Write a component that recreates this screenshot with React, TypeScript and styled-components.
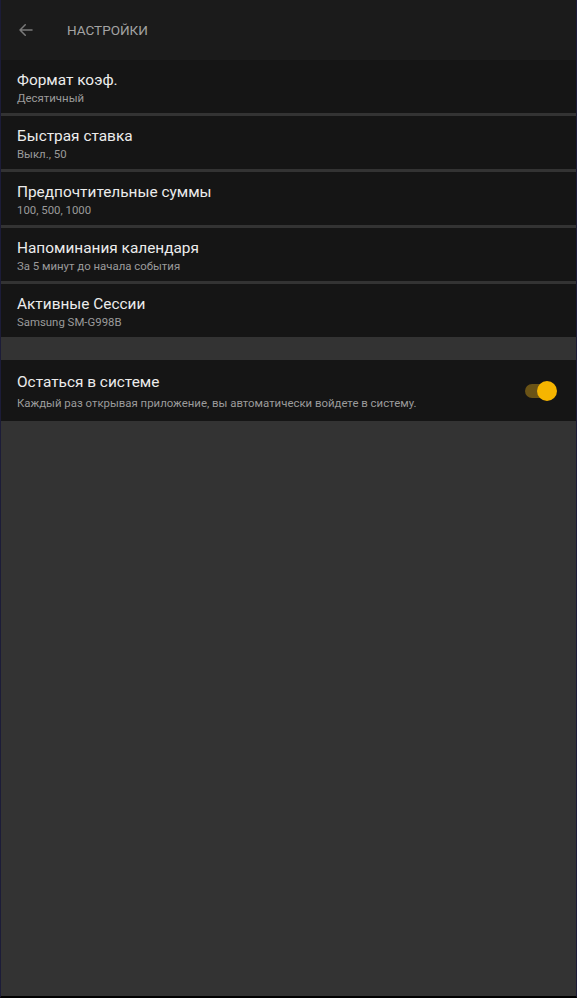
import React from "react";
import styled, { createGlobalStyle } from "styled-components";

const Global = createGlobalStyle`
  html, body { margin: 0; padding: 0; background: #000; }
  body { font-family: Roboto, "Noto Sans", sans-serif; }
`;

const Frame = styled.div`
  width: 577px;
  height: 998px;
  box-sizing: border-box;
  border-left: 1px solid #1c1c38;
  border-right: 1px solid #1c1c38;
  border-bottom: 2px solid #000;
  background: #333333;
  display: flex;
  flex-direction: column;
  overflow: hidden;
`;

const Header = styled.header`
  height: 60px;
  background: #1b1b1b;
  display: flex;
  align-items: center;
  padding-left: 16px;
  flex-shrink: 0;
`;

const Back = styled.svg`
  width: 18px;
  height: 18px;
  margin-right: 32px;
`;

const HeaderTitle = styled.h1`
  margin: 0;
  font-size: 13.5px;
  font-weight: 400;
  color: #a3a3a3;
  letter-spacing: 0;
`;

const List = styled.div`
  display: flex;
  flex-direction: column;
  gap: 3px;
`;

const Row = styled.div<{ $tall?: boolean }>`
  height: ${(p) => (p.$tall ? 61 : 53)}px;
  background: #151515;
  display: flex;
  align-items: center;
  padding: 0 19px 0 16px;
  box-sizing: border-box;
`;

const Texts = styled.div`
  flex: 1;
  display: flex;
  flex-direction: column;
`;

const Title = styled.div`
  font-size: 15.4px;
  color: #ececec;
  line-height: 20px;
  margin-top: 1px;
`;

const Sub = styled.div<{ $gap?: number }>`
  font-size: 11.4px;
  color: #9b9b9b;
  line-height: 14px;
  margin-top: ${(p) => p.$gap ?? 1}px;
`;

const Spacer = styled.div`
  height: 23px;
  flex-shrink: 0;
`;

const Toggle = styled.div`
  position: relative;
  width: 32px;
  height: 22px;
`;

const Track = styled.div`
  position: absolute;
  left: 0;
  top: 4px;
  width: 30px;
  height: 14px;
  border-radius: 7px;
  background: #6a5316;
`;

const Thumb = styled.div`
  position: absolute;
  right: 0;
  top: 1px;
  width: 20px;
  height: 20px;
  border-radius: 50%;
  background: #f6b500;
`;

const items = [
  { t: "Формат коэф.", s: "Десятичный" },
  { t: "Быстрая ставка", s: "Выкл., 50" },
  { t: "Предпочтительные суммы", s: "100, 500, 1000" },
  { t: "Напоминания календаря", s: "За 5 минут до начала события" },
  { t: "Активные Сессии", s: "Samsung SM-G998B" },
];

export default function App() {
  return (
    <>
      <Global />
      <Frame>
        <Header>
          <Back viewBox="0 0 24 24" fill="none" stroke="#7a7a7a" strokeWidth="2" strokeLinecap="round" strokeLinejoin="round">
            <path d="M20 12H4M11 5l-7 7 7 7" />
          </Back>
          <HeaderTitle>НАСТРОЙКИ</HeaderTitle>
        </Header>
        <List>
          {items.map((it) => (
            <Row key={it.t}>
              <Texts>
                <Title>{it.t}</Title>
                <Sub>{it.s}</Sub>
              </Texts>
            </Row>
          ))}
        </List>
        <Spacer />
        <Row $tall>
          <Texts>
            <Title>Остаться в системе</Title>
            <Sub $gap={4}>Каждый раз открывая приложение, вы автоматически войдете в систему.</Sub>
          </Texts>
          <Toggle>
            <Track />
            <Thumb />
          </Toggle>
        </Row>
      </Frame>
    </>
  );
}
